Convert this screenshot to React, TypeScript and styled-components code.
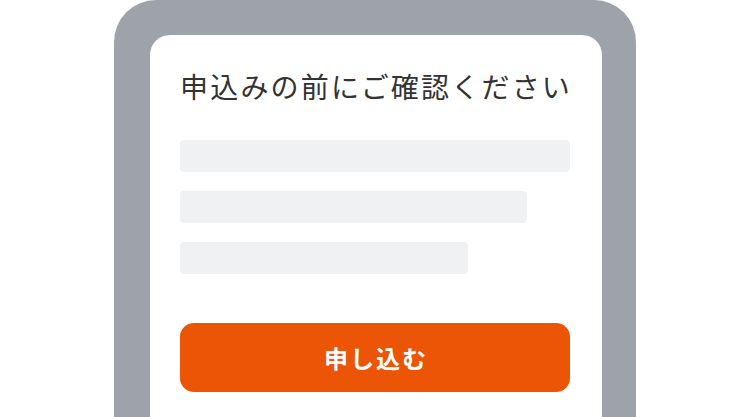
import * as React from 'react';
import styled, { createGlobalStyle } from 'styled-components';

const GlobalStyle = createGlobalStyle`
  html, body {
    margin: 0;
    padding: 0;
    background: #fff;
  }

  body {
    font-family: 'Noto Sans CJK JP', 'Noto Sans', sans-serif;
  }
`;

const Stage = styled.div`
  display: flex;
  justify-content: center;
  width: 750px;
  height: 417px;
  overflow: hidden;
  background: #fff;
`;

const PhoneFrame = styled.div`
  display: flex;
  width: 522px;
  height: 417px;
  padding: 35px 36px 0 36px;
  box-sizing: border-box;

  background: #9da3a9;
  border-radius: 42px 42px 0 0;
`;

const Screen = styled.div`
  display: flex;
  flex-direction: column;
  flex: 1;
  padding: 26px 30px 0 30px;

  background: #fff;
  border-radius: 20px 20px 0 0;
`;

const Title = styled.h1`
  margin: 0;

  font-size: 28px;
  font-weight: 400;
  line-height: 50px;
  letter-spacing: 2.2px;
  color: #333;
  white-space: nowrap;
`;

const Lines = styled.div`
  display: flex;
  flex-direction: column;
  gap: 19px;
  margin-top: 29px;
`;

const Line = styled.div<{ $width: number }>`
  width: ${(p) => p.$width}px;
  height: 32px;

  background: #f0f1f3;
  border-radius: 4px;
`;

const ApplyButton = styled.button`
  display: flex;
  align-items: center;
  justify-content: center;
  width: 390px;
  height: 69px;
  margin-top: 49px;
  padding: 0 0 0 2px;
  box-sizing: border-box;

  font-family: 'Noto Sans CJK JP', 'Noto Sans', sans-serif;
  font-size: 24px;
  font-weight: 700;
  letter-spacing: 2px;
  color: #fff;

  background: #eb5505;
  border: none;
  border-radius: 14px;
`;

const lineWidths = [390, 347, 288];

const App: React.FunctionComponent = () => {
  return (
    <>
      <GlobalStyle />
      <Stage>
        <PhoneFrame>
          <Screen>
            <Title>申込みの前にご確認ください</Title>
            <Lines>
              {lineWidths.map((w, i) => (
                <Line key={i} $width={w} />
              ))}
            </Lines>
            <ApplyButton>申し込む</ApplyButton>
          </Screen>
        </PhoneFrame>
      </Stage>
    </>
  );
};

export default App;
